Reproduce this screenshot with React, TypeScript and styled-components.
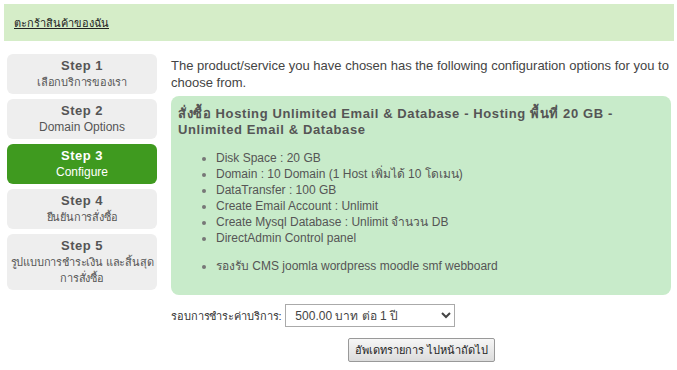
import React from "react";
import styled, { createGlobalStyle } from "styled-components";

const Global = createGlobalStyle`
  html, body { margin: 0; padding: 0; background: #ffffff; }
  body { font-family: "Liberation Sans", "Noto Sans", sans-serif; font-size: 13px; color: #444; }
`;

const Page = styled.div`
  padding: 4px 3px 0 4px;
  width: 670px;
`;

const Header = styled.div`
  background: #d5edc8;
  height: 37px;
  display: flex;
  align-items: center;
  padding-left: 10px;
`;

const HeaderLink = styled.a`
  color: #222;
  text-decoration: underline;
  font-size: 11px;
`;

const Body = styled.div`
  display: flex;
  margin-top: 13px;
  gap: 14px;
  padding-left: 3px;
`;

const Sidebar = styled.div`
  width: 150px;
  display: flex;
  flex-direction: column;
  gap: 5px;
  flex-shrink: 0;
`;

const StepBox = styled.div<{ $active?: boolean }>`
  background: ${(p) => (p.$active ? "#3f9a1f" : "#eeeeee")};
  color: ${(p) => (p.$active ? "#ffffff" : "#555")};
  border-radius: 6px;
  text-align: center;
  padding: 4px 0;
  line-height: 16px;
`;

const StepTitle = styled.div`
  font-weight: bold;
  font-size: 13px;
  letter-spacing: 0.5px;
`;

const StepSub = styled.div<{ $thai?: boolean }>`
  font-size: ${(p) => (p.$thai ? "11px" : "12px")};
  white-space: nowrap;
  letter-spacing: ${(p) => (p.$thai ? "-0.2px" : "0")};
`;

const Main = styled.div`
  flex: 1;
  display: flex;
  flex-direction: column;
`;

const Intro = styled.p`
  margin: 3px 0 0;
  line-height: 17px;
  color: #444;
`;

const ProductBox = styled.div`
  margin: 5px 3px 0 0;
  background: #c8ebca;
  border-radius: 8px;
  padding: 10px 10px 21px 7px;
`;

const ProductTitle = styled.div`
  font-weight: bold;
  color: #555;
  line-height: 16px;
  letter-spacing: 0.6px;
`;

const FeatureList = styled.ul`
  margin: 12px 0 0;
  padding-left: 38px;
  line-height: 16px;
  font-size: 12px;
  color: #555;
  li::marker { color: #777; }
`;

const Spacer = styled.li`
  list-style: none;
  height: 12px;
`;

const CycleRow = styled.div`
  display: flex;
  align-items: center;
  margin-top: 9px;
  gap: 4px;
`;

const Label = styled.span`
  font-size: 11px;
  color: #333;
  letter-spacing: -0.1px;
`;

const Select = styled.select`
  width: 170px;
  height: 23px;
  font-family: inherit;
  font-size: 12px;
  color: #444;
  border: 1px solid #aaa;
  background: #fff;
  padding: 0 5px;
`;

const ButtonRow = styled.div`
  display: flex;
  padding-left: 177px;
  margin-top: 11px;
`;

const Button = styled.button`
  font-family: inherit;
  font-size: 11px;
  color: #222;
  height: 24px;
  padding: 0 6px;
  border: 1px solid #999;
  border-radius: 2px;
  background: linear-gradient(#f6f6f6, #dcdcdc);
`;

const steps = [
  { t: "Step 1", s: ["เลือกบริการของเรา"], thai: true },
  { t: "Step 2", s: ["Domain Options"] },
  { t: "Step 3", s: ["Configure"], active: true },
  { t: "Step 4", s: ["ยืนยันการสั่งซื้อ"], thai: true },
  { t: "Step 5", s: ["รูปแบบการชำระเงิน และสิ้นสุด", "การสั่งซื้อ"], thai: true },
];

export default function App() {
  return (
    <Page>
      <Global />
      <Header>
        <HeaderLink href="#">ตะกร้าสินค้าของฉัน</HeaderLink>
      </Header>
      <Body>
        <Sidebar>
          {steps.map((st) => (
            <StepBox key={st.t} $active={st.active}>
              <StepTitle>{st.t}</StepTitle>
              {st.s.map((line) => (
                <StepSub key={line} $thai={st.thai}>
                  {line}
                </StepSub>
              ))}
            </StepBox>
          ))}
        </Sidebar>
        <Main>
          <Intro>
            The product/service you have chosen has the following configuration options for you to choose from.
          </Intro>
          <ProductBox>
            <ProductTitle>
              สั่งซื้อ Hosting Unlimited Email &amp; Database - Hosting พื้นที่ 20 GB - Unlimited Email &amp; Database
            </ProductTitle>
            <FeatureList>
              <li>Disk Space : 20 GB</li>
              <li>Domain : 10 Domain (1 Host เพิ่มได้ 10 โดเมน)</li>
              <li>DataTransfer : 100 GB</li>
              <li>Create Email Account : Unlimit</li>
              <li>Create Mysql Database : Unlimit จำนวน DB</li>
              <li>DirectAdmin Control panel</li>
              <Spacer />
              <li>รองรับ CMS joomla wordpress moodle smf webboard</li>
            </FeatureList>
          </ProductBox>
          <CycleRow>
            <Label>รอบการชำระค่าบริการ:</Label>
            <Select defaultValue="1">
              <option value="1">500.00 บาท ต่อ 1 ปี</option>
            </Select>
          </CycleRow>
          <ButtonRow>
            <Button>อัพเดทรายการ ไปหน้าถัดไป</Button>
          </ButtonRow>
        </Main>
      </Body>
    </Page>
  );
}
